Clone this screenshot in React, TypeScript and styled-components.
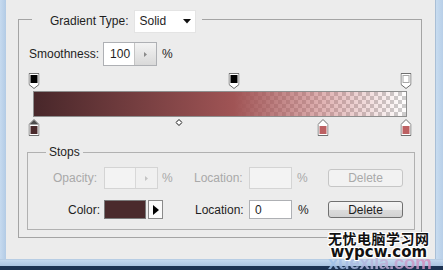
import React from "react";
import styled, { createGlobalStyle } from "styled-components";

const GlobalStyle = createGlobalStyle`
  html, body { margin: 0; padding: 0; background: #1c3352; }
  body {
    font-family: "Liberation Sans", Arial, sans-serif;
    font-size: 12px;
    color: #1e1e1e;
  }
  * { box-sizing: border-box; }
`;

const Window = styled.div`
  position: relative;
  width: 443px;
  height: 270px;
  display: flex;
  flex-direction: column;
  overflow: hidden;
`;

const Body = styled.div`
  display: flex;
  height: 259px;
`;

const LeftEdge = styled.div`
  width: 6px;
  background: linear-gradient(to right, #c6daef, #b3cbe5);
`;

const RightEdge = styled.div`
  width: 8px;
  border-left: 1px solid #a9bfd6;
  background: linear-gradient(to right, #c8dcf0, #b8cfe8);
`;

const BottomEdge = styled.div`
  height: 7px;
  background: linear-gradient(#c3d8ee, #aac4e0);
  border-top: 1px solid #b7cde4;
`;

const Taskbar = styled.div`
  flex: 1;
  background: #1c3352;
`;

const Panel = styled.div`
  flex: 1;
  background: #ececec;
  padding: 0 13px 0 12px;
`;

const Group = styled.fieldset<{ $inner?: boolean }>`
  margin: ${(p) => (p.$inner ? "9px 0 0" : "10px 0 0")};
  border: 1px solid ${(p) => (p.$inner ? "#b1b1b1" : "#a4a4a4")};
  padding: ${(p) => (p.$inner ? "0 0 10px 0" : "0 6px 7px 8px")};
  min-width: 0;
`;

const Legend = styled.legend<{ $inner?: boolean }>`
  padding: ${(p) => (p.$inner ? "0 3px" : "0 6px 0 18px")};
  margin-left: ${(p) => (p.$inner ? "18px" : "5px")};
  line-height: 14px;
`;

const LegendRow = styled.span`
  display: flex;
  align-items: flex-start;
  gap: 5px;
  height: 18px;
  line-height: 23px;
`;

const Select = styled.div`
  width: 62px;
  height: 23px;
  background: #fff;
  border: 1px solid #e4e4e4;
  display: flex;
  align-items: center;
  justify-content: space-between;
  padding: 0 4px 0 5px;
  line-height: 21px;
`;

const Row = styled.div`
  display: flex;
  align-items: center;
  gap: 4px;
  margin-top: 14px;
  padding-left: 2px;
  height: 24px;
`;

const Pct = styled.span<{ $disabled?: boolean; $pad?: number }>`
  color: ${(p) => (p.$disabled ? "#a9a9a9" : "#1e1e1e")};
  padding-left: ${(p) => p.$pad ?? 0}px;
`;

const Spin = styled.div<{ $disabled?: boolean; $h: number }>`
  display: flex;
  width: 54px;
  height: ${(p) => p.$h}px;
  border: 1px solid ${(p) => (p.$disabled ? "#d4d4d4" : "#aeb0b4")};
  background: ${(p) => (p.$disabled ? "#f3f3f3" : "#fff")};
`;

const SpinValue = styled.div<{ $disabled?: boolean }>`
  width: 31px;
  border-right: 1px solid ${(p) => (p.$disabled ? "#d8d8d8" : "#c4c4c4")};
  padding-left: 6px;
  display: flex;
  align-items: center;
`;

const SpinArrow = styled.div<{ $disabled?: boolean }>`
  flex: 1;
  display: flex;
  align-items: center;
  justify-content: center;
  background: ${(p) =>
    p.$disabled ? "#f0f0f0" : "linear-gradient(#f3f3f3, #d9d9d9)"};
`;

const Editor = styled.div`
  margin: 7px 9px 0 7px;
`;

const MarkerRow = styled.div<{ $h: number }>`
  position: relative;
  height: ${(p) => p.$h}px;
`;

const Marker = styled.div`
  position: absolute;
  top: 0;
  display: flex;
  transform: translateX(-50%);
`;

const Bar = styled.div`
  height: 26px;
  margin: 2px -1px;
  border: 1px solid #8e8e8e;
  background:
    linear-gradient(
      to right,
      rgba(72, 39, 42, 1) 0%,
      rgba(160, 84, 85, 1) 53.8%,
      rgba(190, 96, 97, 0.48) 77.7%,
      rgba(190, 96, 97, 0) 100%
    ),
    repeating-conic-gradient(#cdcdcd 0% 25%, #ffffff 0% 50%) 0 0 / 8px 8px;
`;

const Grid = styled.div`
  display: grid;
  grid-template-columns: 76px 86px 59px 43px 36px 75px;
  grid-template-rows: 22px 19px;
  row-gap: 11px;
  margin-top: 8px;
  align-items: center;
`;

const Label = styled.span<{ $disabled?: boolean; $right?: number; $left?: number }>`
  color: ${(p) => (p.$disabled ? "#a9a9a9" : "#1e1e1e")};
  text-align: ${(p) => (p.$right !== undefined ? "right" : "left")};
  padding-right: ${(p) => p.$right ?? 0}px;
  padding-left: ${(p) => p.$left ?? 0}px;
`;

const Cell = styled.div`
  display: flex;
  align-items: center;
  gap: 4px;
  height: 100%;
`;

const TextInput = styled.div<{ $disabled?: boolean }>`
  width: 43px;
  height: 100%;
  border: 1px solid ${(p) => (p.$disabled ? "#d4d4d4" : "#aeb0b4")};
  background: ${(p) => (p.$disabled ? "#f3f3f3" : "#fff")};
  padding-left: 5px;
  display: flex;
  align-items: center;
`;

const Swatch = styled.div<{ $color: string }>`
  width: 42px;
  height: 19px;
  border: 1px solid #7a7a7a;
  background: ${(p) => p.$color};
`;

const ArrowButton = styled.div`
  width: 15px;
  height: 19px;
  margin-left: -2px;
  border: 1px solid #8a8a8a;
  background: #fafafa;
  display: flex;
  align-items: center;
  justify-content: center;
`;

const Button = styled.div<{ $disabled?: boolean; $h: number }>`
  width: 75px;
  height: ${(p) => p.$h}px;
  border-radius: 3px;
  border: 1px solid ${(p) => (p.$disabled ? "#c6c6c6" : "#707070")};
  background: ${(p) =>
    p.$disabled ? "#f2f2f2" : "linear-gradient(#f4f4f4 0%, #ebebeb 50%, #dcdcdc 51%, #d2d2d2 100%)"};
  color: ${(p) => (p.$disabled ? "#a9a9a9" : "#1e1e1e")};
  display: flex;
  align-items: center;
  justify-content: center;
`;

const Watermark = styled.div`
  position: absolute;
  left: 328px;
  top: 231px;
  display: flex;
  flex-direction: column;
  align-items: center;
  pointer-events: none;
`;

const Faint = styled.div`
  position: absolute;
  left: 328px;
  top: 253px;
  font-family: "Liberation Sans", Arial, sans-serif;
  font-weight: bold;
  font-size: 19px;
  line-height: 20px;
  letter-spacing: -0.5px;
  background: linear-gradient(to right, #9cc3ea 0%, #b9b6dc 45%, #d58cbc 100%);
  -webkit-background-clip: text;
  background-clip: text;
  color: transparent;
  opacity: 0.85;
`;

const CnText = styled.span`
  font-family: "Noto Sans CJK SC", sans-serif;
  font-weight: bold;
  font-size: 14px;
  line-height: 15px;
  letter-spacing: 0.5px;
  color: #111;
  text-shadow: 1px 0 #fff, -1px 0 #fff, 0 1px #fff, 0 -1px #fff, 1px 1px #fff, -1px -1px #fff, 1px -1px #fff, -1px 1px #fff;
`;

const EnText = styled.span`
  font-family: "DejaVu Sans", sans-serif;
  font-weight: bold;
  font-size: 15px;
  line-height: 13px;
  color: #111;
  text-shadow: 1px 0 #fff, -1px 0 #fff, 0 1px #fff, 0 -1px #fff, 1px 1px #fff, -1px -1px #fff, 1px -1px #fff, -1px 1px #fff;
`;

const DownArrow = () => (
  <svg width="8" height="5" viewBox="0 0 8 5">
    <path d="M0 0H8L4 4.5Z" fill="#111" />
  </svg>
);

const SmallRight = ({ color }: { color: string }) => (
  <svg width="3" height="5" viewBox="0 0 3 5">
    <path d="M0 0L3 2.5L0 5Z" fill={color} />
  </svg>
);

const TopMarker = ({ fill }: { fill: string }) => (
  <svg width="11" height="16" viewBox="0 0 11 16">
    <path d="M0.5 0.5H10.5V11.5L5.5 15.5L0.5 11.5Z" fill="#fff" stroke="#6f6f6f" />
    <rect
      x="2.5"
      y="2.5"
      width="6"
      height="7"
      fill={fill}
      stroke={fill === "#fff" ? "#a8a8a8" : fill}
    />
  </svg>
);

const BottomMarker = ({ color, selected }: { color: string; selected?: boolean }) => (
  <svg width="11" height="17" viewBox="0 0 11 17">
    <path d="M5.5 0.5L10.5 5.5V16.5H0.5V5.5Z" fill="#fff" stroke="#6f6f6f" />
    {selected && <path d="M5.5 1L10 5.5H1Z" fill="#4d4d4d" />}
    <rect x="2.5" y="7.5" width="6" height="7" fill={color} stroke={color} />
  </svg>
);

const Diamond = () => (
  <svg width="7" height="7" viewBox="0 0 7 7">
    <path d="M3.5 0.5L6.5 3.5L3.5 6.5L0.5 3.5Z" fill="#fff" stroke="#111" />
  </svg>
);

const opacityStops = [
  { pos: 0, fill: "#000" },
  { pos: 53.8, fill: "#000" },
  { pos: 100, fill: "#fff" },
];

const colorStops = [
  { pos: 0, color: "#4a2a2c", selected: true },
  { pos: 77.7, color: "#bd6163" },
  { pos: 100, color: "#bd6163" },
];

export default function App() {
  return (
    <>
      <GlobalStyle />
      <Window>
        <Body>
          <LeftEdge />
          <Panel>
            <Group>
              <Legend>
                <LegendRow>
                  <span>Gradient Type:</span>
                  <Select>
                    <span>Solid</span>
                    <DownArrow />
                  </Select>
                </LegendRow>
              </Legend>

              <Row>
                <span>Smoothness:</span>
                <Spin $h={24}>
                  <SpinValue>100</SpinValue>
                  <SpinArrow>
                    <SmallRight color="#8a8a8a" />
                  </SpinArrow>
                </Spin>
                <Pct $pad={1}>%</Pct>
              </Row>

              <Editor>
                <MarkerRow $h={16}>
                  {opacityStops.map((s, i) => (
                    <Marker key={i} style={{ left: `${s.pos}%` }}>
                      <TopMarker fill={s.fill} />
                    </Marker>
                  ))}
                </MarkerRow>
                <Bar />
                <MarkerRow $h={17}>
                  {colorStops.map((s, i) => (
                    <Marker key={i} style={{ left: `${s.pos}%` }}>
                      <BottomMarker color={s.color} selected={s.selected} />
                    </Marker>
                  ))}
                  <Marker style={{ left: "38.9%", top: "0px" }}>
                    <Diamond />
                  </Marker>
                </MarkerRow>
              </Editor>

              <Group $inner>
                <Legend $inner>Stops</Legend>
                <Grid>
                  <Label $disabled $right={7}>Opacity:</Label>
                  <Cell>
                    <Spin $disabled $h={22}>
                      <SpinValue $disabled />
                      <SpinArrow $disabled>
                        <SmallRight color="#c4c4c4" />
                      </SpinArrow>
                    </Spin>
                    <Pct $disabled>%</Pct>
                  </Cell>
                  <Label $disabled $left={4}>Location:</Label>
                  <TextInput $disabled />
                  <Label $disabled $left={5}>%</Label>
                  <Cell>
                    <Button $disabled $h={18}>Delete</Button>
                  </Cell>

                  <Label $right={4}>Color:</Label>
                  <Cell>
                    <Swatch $color="#4a2a2c" />
                    <ArrowButton>
                      <svg width="6" height="10" viewBox="0 0 6 10">
                        <path d="M0 0L6 5L0 10Z" fill="#000" />
                      </svg>
                    </ArrowButton>
                  </Cell>
                  <Label $left={5}>Location:</Label>
                  <TextInput>0</TextInput>
                  <Label $left={6}>%</Label>
                  <Cell>
                    <Button $h={17}>Delete</Button>
                  </Cell>
                </Grid>
              </Group>
            </Group>
          </Panel>
          <RightEdge />
        </Body>
        <BottomEdge />
        <Taskbar />
        <Faint>xuexila.com</Faint>
        <Watermark>
          <CnText>无忧电脑学习网</CnText>
          <EnText>wypcw.com</EnText>
        </Watermark>
      </Window>
    </>
  );
}
